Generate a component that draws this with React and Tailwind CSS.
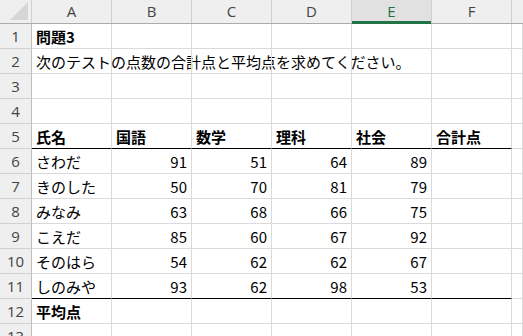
const cols = ['A', 'B', 'C', 'D', 'E', 'F'];

const scores = [
  ['さわだ', 91, 51, 64, 89],
  ['きのした', 50, 70, 81, 79],
  ['みなみ', 63, 68, 66, 75],
  ['こえだ', 85, 60, 67, 92],
  ['そのはら', 54, 62, 62, 67],
  ['しのみや', 93, 62, 98, 53],
];

const rows = [
  [{ v: '問題3', b: true }],
  [{ v: '次のテストの点数の合計点と平均点を求めてください。' }],
  [],
  [],
  ['氏名', '国語', '数学', '理科', '社会', '合計点'].map((v) => ({ v, b: true })),
  ...scores.map((r) => r.map((v, i) => ({ v, num: i > 0 }))),
  [{ v: '平均点', b: true }],
  [],
];

const Cell = ({ cell, bottom, last }) => (
  <div
    className={`relative flex h-full shrink-0 items-center border-r border-[#dadada] ${last ? 'flex-1' : 'w-[80px]'} ${bottom}`}
  >
    {cell && (
      <span
        className={`absolute inset-y-0 flex items-center whitespace-nowrap text-[15px] leading-none text-black ${
          cell.num ? 'right-[4px]' : 'left-[4px]'
        } ${cell.b ? 'font-bold' : ''}`}
      >
        {cell.v}
      </span>
    )}
  </div>
);

export default function App() {
  return (
    <div
      className="h-[336px] w-[523px] overflow-hidden bg-white"
      style={{ fontFamily: '"Noto Sans CJK JP", "Noto Sans", sans-serif' }}
    >
      {/* column header */}
      <div className="flex h-[24px] border-b border-[#ababab] bg-[#efefef]">
        <div className="relative w-[32px] shrink-0 border-r border-[#d0d0d0]">
          <div className="absolute bottom-[3px] right-[3px] h-0 w-0 border-b-[18px] border-l-[18px] border-b-[#d6d6d6] border-l-transparent" />
        </div>
        {cols.map((c) => (
          <div
            key={c}
            className={`relative flex w-[80px] shrink-0 items-center justify-center border-r border-[#d0d0d0] text-[15px] ${
              c === 'E' ? 'bg-[#e1e1e1] text-[#217346]' : 'text-[#444]'
            }`}
            style={{ fontFamily: '"Open Sans", "Noto Sans", sans-serif' }}
          >
            {c}
            {c === 'E' && <div className="absolute -bottom-px left-0 right-0 h-[3px] bg-[#217346]" />}
          </div>
        ))}
        <div className="flex-1" />
      </div>

      {rows.map((r, ri) => {
        const n = ri + 1;
        const blackBottom = n === 5 || n === 11;
        return (
          <div key={n} className="flex h-[25px]">
            <div
              className="flex w-[32px] shrink-0 items-center justify-center border-r border-b border-[#d0d0d0] border-r-[#bdbdbd] bg-[#efefef] text-[15px] text-[#444]"
              style={{ fontFamily: '"Open Sans", "Noto Sans", sans-serif' }}
            >
              {n}
            </div>
            {cols.map((c, ci) => (
              <Cell
                key={c}
                cell={r[ci]}
                bottom={blackBottom ? 'border-b border-b-black' : 'border-b border-b-[#dadada]'}
              />
            ))}
            <Cell last bottom="border-b border-b-[#dadada]" />
          </div>
        );
      })}
    </div>
  );
}
